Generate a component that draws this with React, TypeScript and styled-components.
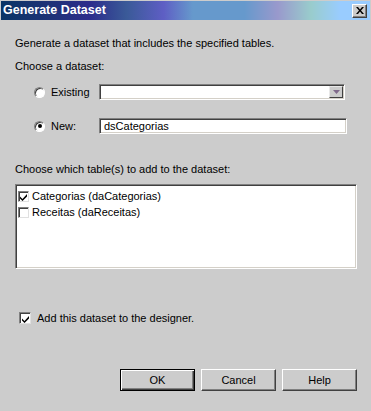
import React from 'react';
import styled, { createGlobalStyle } from 'styled-components';

const GlobalStyle = createGlobalStyle`
    html, body {
        margin: 0;
        padding: 0;
        background: #cccccc;
    }
    body {
        font-family: 'Liberation Sans', Arial, sans-serif;
        font-size: 11px;
        color: #000000;
    }
`;

const Window = styled.div`
    width: 371px;
    height: 411px;
    box-sizing: border-box;
    padding: 1px;
    background: #cccccc;
    display: flex;
    flex-direction: column;
`;

const TitleBar = styled.div`
    height: 19px;
    display: flex;
    align-items: center;
    justify-content: space-between;
    padding: 0 3px 0 2px;
    background: linear-gradient(
        to right,
        #0a3566 0%,
        #1f3278 14%,
        #2c2c8c 24%,
        #3a5a98 34%,
        #5e5ec4 44%,
        #6699cc 52%,
        #6699cc 66%,
        #9999cc 75%,
        #99cccc 84%,
        #99ccff 92%,
        #99ccff 100%
    );
`;

const TitleText = styled.span`
    color: #ffffff;
    font-weight: bold;
    font-size: 12.5px;
    line-height: 19px;
`;

const CloseButton = styled.div`
    width: 15px;
    height: 14px;
    box-sizing: border-box;
    background: #cccccc;
    border-top: 1px solid #ffffff;
    border-left: 1px solid #ffffff;
    border-right: 1px solid #404040;
    border-bottom: 1px solid #404040;
    box-shadow: inset -1px -1px 0 #808080;
    display: flex;
    align-items: center;
    justify-content: center;
`;

const Body = styled.div`
    flex: 1;
    display: flex;
    flex-direction: column;
    padding: 0 13px 19px 14px;
`;

const Text = styled.div<{ $top: number }>`
    line-height: 14px;
    margin-top: ${({ $top }) => $top}px;
`;

const ChoiceRow = styled.div<{ $top: number }>`
    display: flex;
    align-items: center;
    height: 16px;
    margin-top: ${({ $top }) => $top}px;
    padding-left: 19px;
`;

const RadioLabel = styled.label`
    width: 65px;
    display: flex;
    align-items: center;
    gap: 6px;
`;

const Radio = styled.span<{ $checked?: boolean }>`
    width: 11px;
    height: 11px;
    box-sizing: border-box;
    border-radius: 50%;
    background: #ffffff;
    border: 1px solid;
    border-color: #808080 #ffffff #ffffff #808080;
    box-shadow: inset 1px 1px 0 #404040;
    display: flex;
    align-items: center;
    justify-content: center;

    &::after {
        content: '';
        display: ${({ $checked }) => ($checked ? 'block' : 'none')};
        width: 4px;
        height: 4px;
        border-radius: 50%;
        background: #000000;
    }
`;

const Sunken = styled.div`
    box-sizing: border-box;
    background: #ffffff;
    border: 1px solid;
    border-color: #808080 #ffffff #ffffff #808080;
    box-shadow: inset 1px 1px 0 #404040, inset -1px -1px 0 #d4d0c8;
`;

const ComboBox = styled(Sunken)`
    width: 246px;
    height: 16px;
    display: flex;
    justify-content: flex-end;
    padding: 1px;
`;

const DropButton = styled.div`
    width: 14px;
    height: 100%;
    box-sizing: border-box;
    background: #cccccc;
    border: 1px solid;
    border-color: #e8e8e8 #404040 #404040 #e8e8e8;
    display: flex;
    align-items: center;
    justify-content: center;
`;

const TextBox = styled(Sunken)`
    width: 248px;
    height: 16px;
    padding: 0 4px;
    line-height: 14px;
    white-space: nowrap;
`;

const ListBox = styled(Sunken)`
    height: 85px;
    margin-top: 8px;
    padding: 3px 2px;
`;

const ListItem = styled.div`
    display: flex;
    align-items: center;
    height: 16px;
    gap: 3px;
`;

const CheckBox = styled.span<{ $size: number }>`
    width: ${({ $size }) => $size}px;
    height: ${({ $size }) => $size}px;
    box-sizing: border-box;
    flex: none;
    background: #ffffff;
    border: 1px solid;
    border-color: #808080 #e0e0e0 #e0e0e0 #808080;
    box-shadow: inset 1px 1px 0 #404040;
    display: flex;
    align-items: center;
    justify-content: center;
`;

const DesignerRow = styled.div`
    display: flex;
    align-items: center;
    gap: 6px;
    height: 14px;
    margin-top: 42px;
    padding-left: 4px;
`;

const Buttons = styled.div`
    margin-top: auto;
    display: flex;
    justify-content: flex-end;
    gap: 6px;
`;

const Button = styled.button<{ $default?: boolean }>`
    width: 75px;
    height: 22px;
    box-sizing: border-box;
    font-family: 'Liberation Sans', Arial, sans-serif;
    font-size: 11px;
    color: #000000;
    background: #cccccc;
    padding: 0;
    border: 1px solid;
    border-color: ${({ $default }) =>
        $default ? '#000000' : '#ffffff #404040 #404040 #ffffff'};
    box-shadow: ${({ $default }) =>
        $default
            ? 'inset 1px 1px 0 #ffffff, inset -1px -1px 0 #404040, inset -2px -2px 0 #808080'
            : 'inset -1px -1px 0 #808080'};
`;

const Check = () => (
    <svg width="8" height="8" viewBox="0 0 8 8" style={{ marginLeft: 1, marginTop: 1 }}>
        <path d="M0 3.5 L2.5 6 L7 1 L7 3.5 L2.5 8 L0 5.5 Z" fill="#000000" />
    </svg>
);

export default function App() {
    return (
        <>
            <GlobalStyle />
            <Window>
                <TitleBar>
                    <TitleText>Generate Dataset</TitleText>
                    <CloseButton>
                        <svg width="8" height="7" viewBox="0 0 8 7">
                            <path
                                d="M0 0 H2 L4 2.5 L6 0 H8 L5 3.5 L8 7 H6 L4 4.5 L2 7 H0 L3 3.5 Z"
                                fill="#000000"
                            />
                        </svg>
                    </CloseButton>
                </TitleBar>
                <Body>
                    <Text $top={16}>Generate a dataset that includes the specified tables.</Text>
                    <Text $top={9}>Choose a dataset:</Text>
                    <ChoiceRow $top={11}>
                        <RadioLabel>
                            <Radio />
                            Existing
                        </RadioLabel>
                        <ComboBox>
                            <DropButton>
                                <svg width="7" height="4" viewBox="0 0 7 4">
                                    <path d="M0 0 H7 L3.5 4 Z" fill="#806a8c" />
                                </svg>
                            </DropButton>
                        </ComboBox>
                    </ChoiceRow>
                    <ChoiceRow $top={18}>
                        <RadioLabel>
                            <Radio $checked />
                            New:
                        </RadioLabel>
                        <TextBox>dsCategorias</TextBox>
                    </ChoiceRow>
                    <Text $top={28}>Choose which table(s) to add to the dataset:</Text>
                    <ListBox>
                        <ListItem>
                            <CheckBox $size={11}>
                                <Check />
                            </CheckBox>
                            Categorias (daCategorias)
                        </ListItem>
                        <ListItem>
                            <CheckBox $size={11} />
                            Receitas (daReceitas)
                        </ListItem>
                    </ListBox>
                    <DesignerRow>
                        <CheckBox $size={12}>
                            <Check />
                        </CheckBox>
                        Add this dataset to the designer.
                    </DesignerRow>
                    <Buttons>
                        <Button $default>OK</Button>
                        <Button>Cancel</Button>
                        <Button>Help</Button>
                    </Buttons>
                </Body>
            </Window>
        </>
    );
}
